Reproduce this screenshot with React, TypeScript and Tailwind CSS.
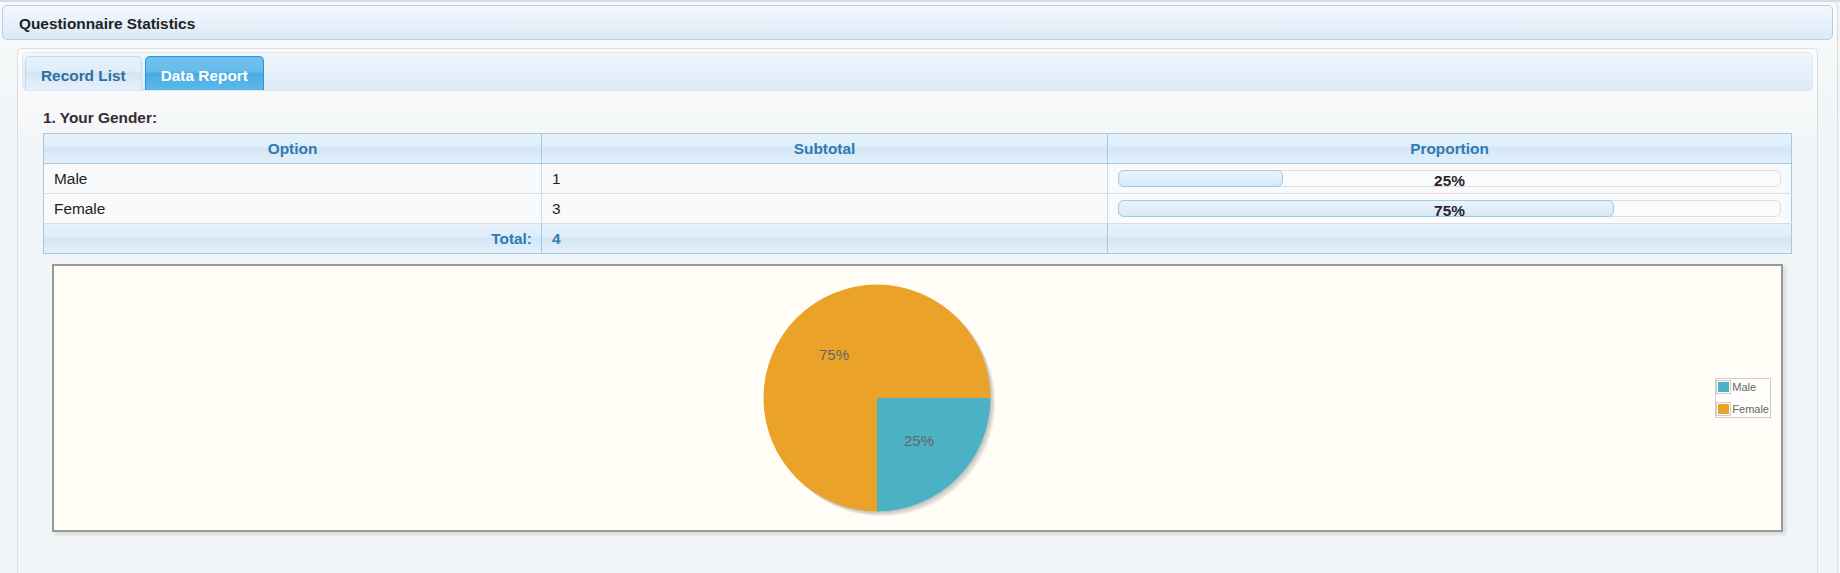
import React from 'react';

const rows = [
  { option: 'Male', count: 1, pct: 25 },
  { option: 'Female', count: 3, pct: 75 },
];

const glass =
  'bg-[linear-gradient(to_bottom,#e6f2fb_0%,#e0eefa_40%,#d3e6f5_50%,#d8e9f7_62%,#e5f1fb_100%)]';

const PieChart = () => {
  const cx = 823;
  const cy = 132;
  const r = 113.5;
  return (
    <div className="relative mx-[9px] mt-[10px] h-[268px] border-2 border-[#999999] bg-[#fffdf6] shadow-[3px_3px_3px_rgba(0,0,0,0.1)]">
      <svg className="block h-full w-full">
        {/* shadow */}
        {[1.2, 2.4, 3.6, 4.8].map((d) => (
          <circle key={d} cx={cx + d} cy={cy + d} r={r} fill="rgba(0,0,0,0.06)" />
        ))}
        <path d={`M${cx},${cy} L${cx},${cy + r} A${r},${r} 0 1 1 ${cx + r},${cy} Z`} fill="#eaa228" />
        <path d={`M${cx},${cy} L${cx + r},${cy} A${r},${r} 0 0 1 ${cx},${cy + r} Z`} fill="#4bb2c5" />
        <text x={cx - 43} y={cy - 44} textAnchor="middle" dominantBaseline="central" fontSize="15" fill="#666666" fontFamily="Liberation Sans, Arial, sans-serif">
          75%
        </text>
        <text x={cx + 42} y={cy + 42} textAnchor="middle" dominantBaseline="central" fontSize="15" fill="#666666" fontFamily="Liberation Sans, Arial, sans-serif">
          25%
        </text>
      </svg>

      {/* legend */}
      <div className="absolute right-[10px] top-[112px] flex flex-col gap-[8px] border border-[#cccccc] bg-white/60 py-px pr-px text-[11px] leading-[14px] text-[#666666]">
        {[
          { label: 'Male', color: 'bg-[#4bb2c5]' },
          { label: 'Female', color: 'bg-[#eaa228]' },
        ].map((l) => (
          <div key={l.label} className="flex items-center">
            <div className="border border-[#cccccc] p-px">
              <div className={`h-[10px] w-[11px] ${l.color}`} />
            </div>
            <span className="ml-px">{l.label}</span>
          </div>
        ))}
      </div>
    </div>
  );
};

const App = () => {
  return (
    <div className="h-[573px] w-full overflow-hidden border-t-2 border-[#dcdcdc] bg-[#f2f5f7] font-['Liberation_Sans',Arial,sans-serif] text-[15.4px] text-[#362b36]">
      <div className="mr-[2px] h-full rounded-tr-[6px] border-r border-[#dddddd] bg-[linear-gradient(to_bottom,#f8fafb,#f2f5f7_120px)] pt-[3px]">
        {/* Page header */}
        <div className="ml-[2px] mr-[4px] h-[35px] rounded-[5px] border border-[#aed0ea] bg-[linear-gradient(to_bottom,#f3f8fd,#dbeaf7)] pl-[16px] pt-[9px] text-[15.4px] font-bold leading-[17px] text-[#222222]">
          Questionnaire Statistics
        </div>

        {/* Tabs panel */}
        <div className="ml-[17px] mr-[19px] mt-[8px] h-[600px] rounded-[5px] border border-[#dddddd] bg-[linear-gradient(to_bottom,#fcfdfd,#f2f5f7_100px)] px-[4px] pt-[3px]">
          <div className="flex h-[39px] gap-[3px] rounded-[5px] border border-[#dce9f5] bg-[linear-gradient(to_bottom,#f0f6fc,#dbeaf7)] pl-[2px] pt-[3px]">
            <div className={`rounded-t-[5px] border border-b-0 border-[#c5dbec] px-[15px] pt-[10px] text-[15.4px] font-bold leading-[17px] text-[#2e6e9e] ${glass}`}>
              Record List
            </div>
            <div className="rounded-t-[5px] border border-b-0 border-[#2694e8] bg-[linear-gradient(to_bottom,#70c2ec_0%,#66bceb_42%,#45a9e2_52%,#4fb0e5_62%,#5cb7e8_100%)] px-[15px] pt-[10px] text-[15.4px] font-bold leading-[17px] text-white">
              Data Report
            </div>
          </div>

          <div className="px-[21px] pt-[18px]">
            <div className="mb-[7px] text-[15.4px] font-bold leading-[17px]">1. Your Gender:</div>

            <table className="w-full table-fixed border-collapse border border-[#a6c9e2] text-[15.4px] leading-[17px]">
              <colgroup>
                <col className="w-[498px]" />
                <col className="w-[566px]" />
                <col />
              </colgroup>
              <thead>
                <tr className={glass}>
                  <th className="h-[30px] border-b border-[#a6c9e2] font-bold text-[#2e7ab3]">Option</th>
                  <th className="h-[30px] border-b border-l border-[#a6c9e2] font-bold text-[#2e7ab3]">Subtotal</th>
                  <th className="h-[30px] border-b border-l border-[#a6c9e2] font-bold text-[#2e7ab3]">Proportion</th>
                </tr>
              </thead>
              <tbody>
                {rows.map((row) => (
                  <tr key={row.option} className="bg-[#f9fafc]">
                    <td className="h-[30px] border-b border-[#dddddd] px-[10px] text-[#222222]">{row.option}</td>
                    <td className="h-[30px] border-b border-l border-[#dddddd] border-l-[#c9dcec] px-[10px] text-[#222222]">
                      {row.count}
                    </td>
                    <td className="h-[30px] border-b border-l border-[#dddddd] border-l-[#c9dcec] px-[10px]">
                      <div className="relative h-[17px] rounded-[6px] border border-[#dddddd] bg-[#fafbfc]">
                        <div
                          className="absolute -bottom-px -left-px -top-px rounded-[6px] border border-[#a6c9e2] bg-[linear-gradient(to_bottom,#e9f3fc,#d8e9f6)]"
                          style={{ width: `${row.pct}%` }}
                        />
                        <span className="absolute left-0 right-0 top-[1px] text-center font-bold leading-[17px] text-[#2b2228]">
                          {row.pct}%
                        </span>
                      </div>
                    </td>
                  </tr>
                ))}
                <tr className={glass}>
                  <td className="h-[30px] px-[9px] text-right font-bold text-[#2e7ab3]">Total:</td>
                  <td className="h-[30px] border-l border-[#a6c9e2] px-[10px] font-bold text-[#2e7ab3]">4</td>
                  <td className="h-[30px] border-l border-[#a6c9e2]" />
                </tr>
              </tbody>
            </table>

            <PieChart />
          </div>
        </div>
      </div>
    </div>
  );
};

export default App;
